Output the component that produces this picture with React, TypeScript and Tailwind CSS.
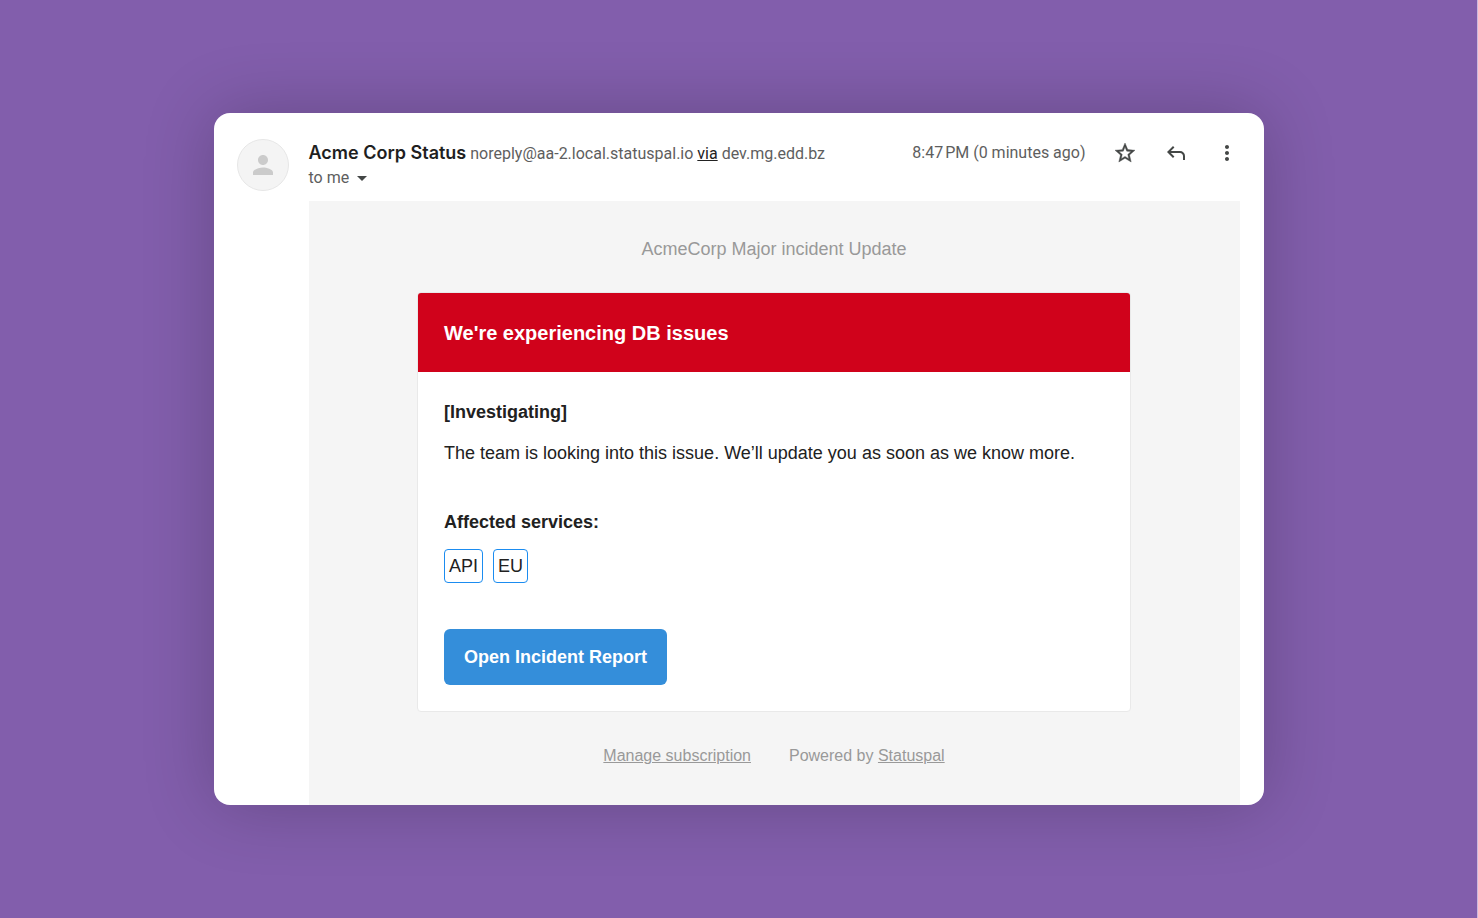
import type { ReactNode } from "react";

const services = ["API", "EU"];

function PersonIcon() {
  return (
    <svg viewBox="0 0 24 24" className="size-[30px] fill-[#cbcbcb]" aria-hidden="true">
      <path d="M12 12c2.21 0 4-1.79 4-4s-1.79-4-4-4-4 1.79-4 4 1.79 4 4 4zm0 2c-2.67 0-8 1.34-8 4v2h16v-2c0-2.66-5.33-4-8-4z" />
    </svg>
  );
}

function StarIcon() {
  return (
    <svg
      viewBox="0 0 24 24"
      className="size-6 fill-[#444746] stroke-[#444746]"
      strokeWidth="0.4"
      aria-hidden="true"
    >
      <path d="M22 9.24l-7.19-.62L12 2 9.19 8.63 2 9.24l5.46 4.73L5.82 21 12 17.27 18.18 21l-1.63-7.03L22 9.24zM12 15.4l-3.76 2.27 1-4.28-3.32-2.88 4.38-.38L12 6.1l1.71 4.04 4.38.38-3.32 2.88 1 4.28L12 15.4z" />
    </svg>
  );
}

function ReplyIcon() {
  return (
    <svg viewBox="0 -960 960 960" className="size-6 fill-[#444746]" aria-hidden="true">
      <path d="M760-200v-160q0-50-35-85t-85-35H273l144 144-57 56-240-240 240-240 57 56-144 144h367q83 0 141.5 58.5T840-360v160h-80Z" />
    </svg>
  );
}

function MoreIcon() {
  return (
    <svg viewBox="0 0 24 24" className="size-6 fill-[#444746]" aria-hidden="true">
      <path d="M12 8c1.1 0 2-.9 2-2s-.9-2-2-2-2 .9-2 2 .9 2 2 2zm0 2c-1.1 0-2 .9-2 2s.9 2 2 2 2-.9 2-2-.9-2-2-2zm0 6c-1.1 0-2 .9-2 2s.9 2 2 2 2-.9 2-2-.9-2-2-2z" />
    </svg>
  );
}

function IconButton({ label, children }: { label: string; children: ReactNode }) {
  return (
    <button type="button" aria-label={label} className="shrink-0 cursor-pointer">
      {children}
    </button>
  );
}

function MessageHeader() {
  return (
    <header className="flex gap-5 pr-[25px] pb-[10px] font-[Roboto,sans-serif] text-base leading-6 text-[#5e5e5e]">
      <div className="flex size-[52px] shrink-0 items-center justify-center rounded-full border border-[#e6e6e6] bg-[#f4f4f4]">
        <PersonIcon />
      </div>
      <div className="min-w-0 flex-1 pt-px">
        <div className="flex flex-wrap items-center justify-between">
          <p className="flex flex-wrap items-baseline gap-x-1">
            <strong className="font-[Inter,sans-serif] text-lg leading-[26px] font-semibold text-[#1f1f1f]">
              Acme Corp Status
            </strong>
            <span>
              noreply@aa-2.local.statuspal.io{" "}
              <a href="#via" className="text-[#222] underline">
                via
              </a>{" "}
              dev.mg.edd.bz
            </span>
          </p>
          <div className="flex items-center gap-[27px]">
            <time>8:47{"\u202f"}PM (0 minutes ago)</time>
            <div className="flex items-center gap-[27px]">
              <IconButton label="Star">
                <StarIcon />
              </IconButton>
              <IconButton label="Reply">
                <ReplyIcon />
              </IconButton>
              <IconButton label="More">
                <MoreIcon />
              </IconButton>
            </div>
          </div>
        </div>
        <button type="button" className="flex cursor-pointer items-center gap-2">
          to me
          <svg viewBox="0 0 10 5" className="h-[5px] w-[10px] fill-[#444746]" aria-hidden="true">
            <path d="M0 0h10L5 5z" />
          </svg>
        </button>
      </div>
    </header>
  );
}

function IncidentCard() {
  return (
    <section className="w-full max-w-[714px] overflow-hidden rounded border border-[#e9e9e9] bg-white">
      <h1 className="bg-[#d0021b] px-[26px] pt-[26px] pb-[25px] text-xl leading-7 font-bold text-white">
        We&apos;re experiencing DB issues
      </h1>
      <div className="flex flex-col items-start p-[26px] text-lg leading-7 text-[#212121]">
        <h2 className="font-bold">[Investigating]</h2>
        <p className="mt-[13px]">
          The team is looking into this issue. We’ll update you as soon as we know more.
        </p>
        <h2 className="mt-[41px] font-bold">Affected services:</h2>
        <ul className="mt-[13px] flex gap-[10px]">
          {services.map((service) => (
            <li
              key={service}
              className="rounded border border-[#1b8cf0] px-1 py-[2px]"
            >
              {service}
            </li>
          ))}
        </ul>
        <a
          href="#report"
          className="mt-[46px] rounded-md bg-[#348eda] px-5 py-[14px] font-bold text-white"
        >
          Open Incident Report
        </a>
      </div>
    </section>
  );
}

export default function App() {
  return (
    <main className="flex min-h-screen items-center justify-center border-r border-[#cbb9de] bg-[#825eac] p-6">
      <article className="w-full max-w-[1050px] overflow-hidden rounded-2xl bg-white pt-[26px] pl-[23px] shadow-[0_0_70px_rgba(0,0,0,0.22)]">
        <MessageHeader />
        <div className="mr-6 ml-[72px] flex flex-col items-center bg-[#f5f5f5] px-6 pt-[34px] pb-[37px] font-['Liberation_Sans',Arial,sans-serif]">
          <p className="text-lg leading-7 text-[#999]">AcmeCorp Major incident Update</p>
          <div className="flex w-full justify-center pt-[29px] pb-8">
            <IncidentCard />
          </div>
          <footer className="flex flex-wrap justify-center gap-x-[38px] text-base leading-6 text-[#999]">
            <a href="#manage" className="underline">
              Manage subscription
            </a>
            <span>
              Powered by{" "}
              <a href="#statuspal" className="underline">
                Statuspal
              </a>
            </span>
          </footer>
        </div>
      </article>
    </main>
  );
}
